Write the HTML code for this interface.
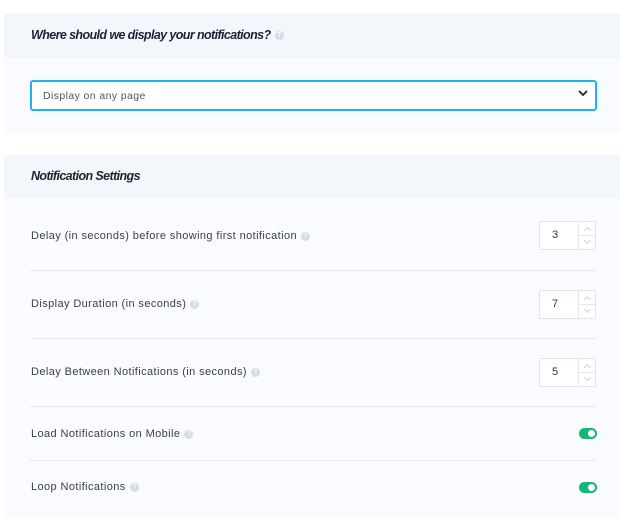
<!DOCTYPE html>
<html><head><style>
body{margin:0;width:620px;height:529px;background:#fff;font-family:"Liberation Sans",sans-serif;position:relative;overflow:hidden}
.p{position:absolute;left:4px;right:0;background:#fafbfe}
.h{position:absolute;left:4px;right:0;background:#f3f6fb}
.t{position:absolute;left:31px;font-weight:bold;font-style:italic;font-size:12.5px;color:#1c2333;letter-spacing:-0.6px}
.q{display:inline-block;width:9px;height:9px;border-radius:50%;background:#d3dceb;color:#fff;font-size:7px;text-align:center;line-height:9px;vertical-align:middle;margin-left:4px;font-style:normal;letter-spacing:0}
.l{position:absolute;left:31px;font-size:11px;color:#3a3f4b;letter-spacing:0.4px}
.sep{position:absolute;left:30px;width:566px;height:1px;background:#e3e8f0}
.sp{position:absolute;left:539px;width:55px;height:27px;border:1px solid #dfe5ee;border-radius:2px;background:#fff;font-size:11px;color:#333}
.sp span{position:absolute;left:12px;top:7px}
.sp i{position:absolute;left:38px;top:0;bottom:0;border-left:1px solid #e3e8f0;width:17px}
.sp i:after{content:"";position:absolute;left:0;right:0;top:13px;border-top:1px solid #e3e8f0}
.sp b,.sp u{position:absolute;left:6px;width:4px;height:4px;border-left:1px solid #cdd6e4;border-top:1px solid #cdd6e4}
.sp b{top:6px;transform:rotate(45deg)}
.sp u{top:16px;transform:rotate(-135deg)}
.tg{position:absolute;left:579px;width:18px;height:11px;border-radius:6px;background:#12b775}
.tg:after{content:"";position:absolute;right:2px;top:2px;width:7px;height:7px;border-radius:50%;background:#fff}
</style></head><body>
<div class="p" style="top:14px;height:119px"></div>
<div class="h" style="top:14px;height:44px"></div>
<div class="t" style="top:28px">Where should we display your notifications?<span class="q">?</span></div>
<div style="position:absolute;left:30px;top:80px;width:563px;height:27px;border:2px solid #1cb6ec;border-radius:3px;background:#fff"></div>
<div class="l" style="left:43px;top:90px;font-size:10.5px;color:#555">Display on any page</div>
<svg style="position:absolute;left:577px;top:89px" width="12" height="9"><path d="M2 2 L6 6 L10 2" stroke="#333" stroke-width="2" fill="none"/></svg>
<div class="p" style="top:155px;height:363px"></div>
<div class="h" style="top:155px;height:43px"></div>
<div class="t" style="top:169px">Notification Settings</div>
<div class="l" style="top:230px">Delay (in seconds) before showing first notification<span class="q">?</span></div>
<div class="sp" style="top:221px"><span>3</span><i><b></b><u></u></i></div>
<div class="sep" style="top:270px"></div>
<div class="l" style="top:298px">Display Duration (in seconds)<span class="q">?</span></div>
<div class="sp" style="top:290px"><span>7</span><i><b></b><u></u></i></div>
<div class="sep" style="top:338px"></div>
<div class="l" style="top:366px">Delay Between Notifications (in seconds)<span class="q">?</span></div>
<div class="sp" style="top:358px"><span>5</span><i><b></b><u></u></i></div>
<div class="sep" style="top:406px"></div>
<div class="l" style="top:428px">Load Notifications on Mobile<span class="q">?</span></div>
<div class="tg" style="top:428px"></div>
<div class="sep" style="top:460px"></div>
<div class="l" style="top:481px">Loop Notifications<span class="q">?</span></div>
<div class="tg" style="top:482px"></div>
</body></html>
